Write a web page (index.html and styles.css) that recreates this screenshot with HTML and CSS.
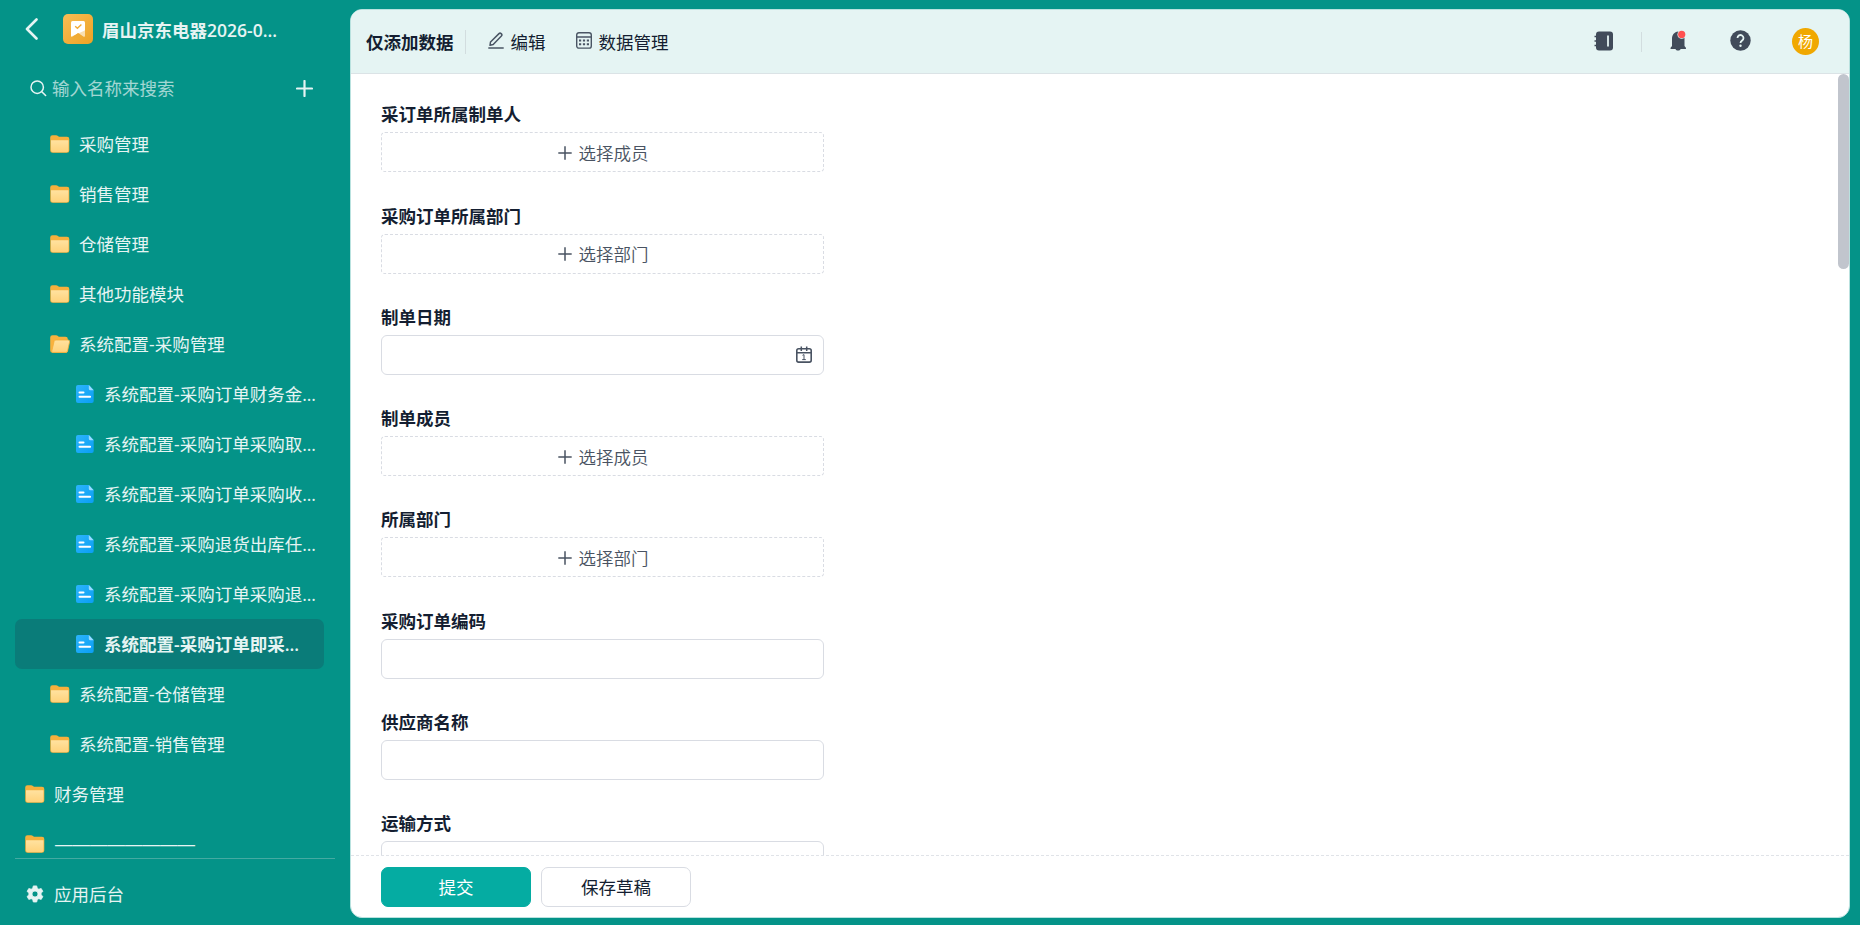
FILE: index.html
```html
<!DOCTYPE html>
<html lang="zh-CN">
<head>
<meta charset="utf-8">
<title>仅添加数据</title>
<link rel="stylesheet" href="styles.css">
</head>
<body>
<svg class="defs" width="0" height="0" aria-hidden="true">
  <defs>
    <linearGradient id="gFolder" x1="0" y1="0" x2="0" y2="1"><stop offset="0" stop-color="#ffe2a0"/><stop offset="1" stop-color="#ffd27a"/></linearGradient>
    <linearGradient id="gDoc" x1="0" y1="0" x2="1" y2="1"><stop offset="0" stop-color="#2cb4fb"/><stop offset="1" stop-color="#0a9ef5"/></linearGradient>
    <symbol id="folder" viewBox="0 0 20 18">
      <path d="M.2 2.500A2.300 2.300 0 0 1 2.500.2h3.700c.6 0 1 .2 1.400.6L9 1.800h8a2.300 2.300 0 0 1 2.300 2.300v11.400a2.300 2.300 0 0 1-2.300 2.300H2.500A2.300 2.300 0 0 1 .2 15.500z" fill="#f6b03d"/>
      <path d="M1 5.300h17.500v10a1.900 1.900 0 0 1-1.900 1.900H2.900A1.900 1.900 0 0 1 1 15.300z" fill="url(#gFolder)"/>
    </symbol>
    <symbol id="folder-open" viewBox="0 0 20 18">
      <path d="M.2 2.500A2.300 2.300 0 0 1 2.500.2h3.700c.6 0 1 .2 1.400.6L8.800 1.800h6.700a2.300 2.300 0 0 1 2.300 2.300v11.400a2.300 2.300 0 0 1-2.300 2.300h-13A2.300 2.300 0 0 1 .2 15.500z" fill="#f9b23e"/>
      <path d="M6 5h11.900c1.300 0 1.900.8 1.700 1.800l-2 9.100c-.2 1-.8 1.500-1.700 1.500H3.100c-1 0-1.500-.6-1.300-1.500L4.100 6.400C4.300 5.500 5 5 6 5z" fill="url(#gFolder)" stroke="#f4ae38" stroke-width=".8"/>
    </symbol>
    <symbol id="doc" viewBox="0 0 18 18">
      <path d="M2 0h11l4.700 5v11a2 2 0 0 1-2 2H2a2 2 0 0 1-2-2V2a2 2 0 0 1 2-2z" fill="url(#gDoc)"/>
      <path d="M12.800 0 17.700 5.200h-3.400a1.500 1.500 0 0 1-1.500-1.500z" fill="#9adcff"/>
      <path d="M3.500 7.500h4M3.500 11.800h10.600" stroke="#fff" stroke-width="2" stroke-linecap="round"/>
    </symbol>
    <symbol id="plus" viewBox="0 0 14 14"><path d="M7 .3v13.400M.3 7h13.400" stroke="currentColor" stroke-width="1.500" fill="none"/></symbol>
  </defs>
</svg>
<div class="app">
  <aside class="sidebar">
    <div class="brand">
      <svg class="back" width="14" height="22" viewBox="0 0 14 22"><path d="M11.500 1.500 2 11l9.500 9.500" fill="none" stroke="currentColor" stroke-width="2.600" stroke-linecap="round" stroke-linejoin="round"/></svg>
      <svg class="logo" width="30" height="30" viewBox="0 0 30 30"><defs><linearGradient id="gLogo" x1="0" y1="0" x2="1" y2="1"><stop offset="0" stop-color="#f8bd55"/><stop offset="1" stop-color="#eda224"/></linearGradient></defs><rect width="30" height="30" rx="5" fill="url(#gLogo)"/><path d="M8 16.500V21.700c0 1.200.8 1.500 1.700.8L15 19l5.300 3.500c.9.700 1.700.4 1.700-.8V16.500z" fill="#f9dfb0"/><path d="M8 8.500A1.500 1.500 0 0 1 9.500 7h11A1.500 1.500 0 0 1 22 8.500V16.500L8 22.500z" fill="#fff"/><path d="M9.200 23.500 15 19l5.800 4.500z" fill="#f0ab35"/><path d="m12.200 12.300 2.200 2 4-3.800" fill="none" stroke="#f2ab34" stroke-width="1.400"/></svg>
      <span class="brand-name">眉山京东电器2026-0...</span>
    </div>
    <div class="search">
      <svg width="17" height="17" viewBox="0 0 17 17"><circle cx="7.200" cy="7.200" r="6.200" fill="none" stroke="currentColor" stroke-width="1.500"/><path d="m11.800 11.800 3.800 3.700" stroke="currentColor" stroke-width="1.600" stroke-linecap="round"/></svg>
      <span class="search-text">输入名称来搜索</span>
      <svg class="add" width="17" height="17" viewBox="0 0 17 17"><path d="M8.500 1v15M1 8.500h15" stroke="currentColor" stroke-width="2.200" stroke-linecap="round"/></svg>
    </div>
    <nav class="tree">
      <div class="node l2"><svg class="folder"><use href="#folder"/></svg><span>采购管理</span></div>
      <div class="node l2"><svg class="folder"><use href="#folder"/></svg><span>销售管理</span></div>
      <div class="node l2"><svg class="folder"><use href="#folder"/></svg><span>仓储管理</span></div>
      <div class="node l2"><svg class="folder"><use href="#folder"/></svg><span>其他功能模块</span></div>
      <div class="node l2"><svg class="folder"><use href="#folder-open"/></svg><span>系统配置-采购管理</span></div>
      <div class="node l3"><svg class="doc"><use href="#doc"/></svg><span>系统配置-采购订单财务金...</span></div>
      <div class="node l3"><svg class="doc"><use href="#doc"/></svg><span>系统配置-采购订单采购取...</span></div>
      <div class="node l3"><svg class="doc"><use href="#doc"/></svg><span>系统配置-采购订单采购收...</span></div>
      <div class="node l3"><svg class="doc"><use href="#doc"/></svg><span>系统配置-采购退货出库任...</span></div>
      <div class="node l3"><svg class="doc"><use href="#doc"/></svg><span>系统配置-采购订单采购退...</span></div>
      <div class="node l3 active"><svg class="doc"><use href="#doc"/></svg><span>系统配置-采购订单即采...</span></div>
      <div class="node l2"><svg class="folder"><use href="#folder"/></svg><span>系统配置-仓储管理</span></div>
      <div class="node l2"><svg class="folder"><use href="#folder"/></svg><span>系统配置-销售管理</span></div>
      <div class="node l1"><svg class="folder"><use href="#folder"/></svg><span>财务管理</span></div>
      <div class="node l1"><svg class="folder"><use href="#folder"/></svg><span class="rule">————————</span></div>
    </nav>
    <div class="admin">
      <svg width="18" height="18" viewBox="0 0 18 18"><path fill="currentColor" stroke="currentColor" stroke-width=".8" stroke-linejoin="round" fill-rule="evenodd" d="M7.300 0h3.400l.6 2.400 1.500.9 2.400-.7 1.700 2.900-1.800 1.700v1.700l1.800 1.700-1.700 2.900-2.400-.7-1.500.9-.6 2.400H7.300l-.6-2.400-1.500-.9-2.400.7-1.700-2.900 1.800-1.700V7.200L1.100 5.500l1.700-2.900 2.400.7 1.500-.9zM9 5.100a3 3 0 1 0 0 6 3 3 0 0 0 0-6z" transform="translate(0 .9)"/></svg>
      <span>应用后台</span>
    </div>
  </aside>
  <main class="panel">
    <header class="topbar">
      <h1>仅添加数据</h1>
      <i class="sep"></i>
      <a class="tool edit"><svg width="16" height="17" viewBox="0 0 16 17"><path d="M2 13.300 2.500 10 11 1.600a1.500 1.500 0 0 1 2.100 0l.3.300a1.500 1.500 0 0 1 0 2.100L5.200 12.500z M.3 16h15.400" fill="none" stroke="currentColor" stroke-width="1.500" stroke-linejoin="round"/></svg><span>编辑</span></a>
      <a class="tool data"><svg width="16" height="17" viewBox="0 0 16 17"><rect x=".7" y=".7" width="14.600" height="15.400" rx="2.200" fill="none" stroke="currentColor" stroke-width="1.400"/><path d="M1 5h14" stroke="currentColor" stroke-width="1.400"/><path d="M3 8.500h2.200M6.900 8.500h2.200M10.800 8.500h2.200M3 12.300h2.200M6.900 12.300h2.200M10.800 12.300h2.200" stroke="currentColor" stroke-width="2"/></svg><span>数据管理</span></a>
      <div class="actions">
        <svg class="book" width="20" height="20" viewBox="0 0 20 20"><rect x="2" y=".5" width="17" height="19" rx="3" fill="currentColor"/><path d="M.5 5.500h3M.5 10h3M.5 14.500h3" stroke="currentColor" stroke-width="1.600"/><path d="M14 4.500v11" stroke="#e5f4f3" stroke-width="1.800"/></svg>
        <i class="sep"></i>
        <svg class="bell" width="18" height="22" viewBox="0 0 18 22"><path d="M8 1.500c-3.500.6-6 3.300-6 7v7.500L.6 17.800c-.3.600 0 1.300.7 1.300h4.200c.7 2 4.400 2 5.100 0h4.600c.7 0 1-.7.700-1.300L14.500 16V8.500C14.500 4.800 12 2.100 8 1.500z" fill="currentColor"/><circle cx="11.700" cy="4.400" r="4.300" fill="#e5f4f3"/><circle cx="11.700" cy="4.400" r="3.600" fill="#ff5050"/></svg>
        <svg class="help" width="21" height="21" viewBox="0 0 21 21"><circle cx="10.500" cy="10.500" r="10.200" fill="currentColor"/><path d="M7.500 8a3 3 0 1 1 4.500 2.600c-1 .6-1.500 1.100-1.500 2.400" fill="none" stroke="#e5f4f3" stroke-width="1.800"/><circle cx="10.500" cy="15.800" r="1.200" fill="#e5f4f3"/></svg>
        <span class="avatar">杨</span>
      </div>
    </header>
    <section class="body">
      <div class="form">
        <div class="field"><label>采订单所属制单人</label><div class="pick"><svg><use href="#plus"/></svg>选择成员</div></div>
        <div class="field"><label>采购订单所属部门</label><div class="pick"><svg><use href="#plus"/></svg>选择部门</div></div>
        <div class="field"><label>制单日期</label><div class="input"><svg width="16" height="17" viewBox="0 0 16 17"><rect x=".8" y="2.700" width="14.400" height="13.400" rx="1.800" fill="none" stroke="currentColor" stroke-width="1.600"/><path d="M1 6.700h14M5.300.5v4.500M10.700.5v4.500" stroke="currentColor" stroke-width="1.500"/><path d="M6.500 9.300 8 8.600v5M6.200 13.600h3.600" fill="none" stroke="currentColor" stroke-width="1"/></svg></div></div>
        <div class="field"><label>制单成员</label><div class="pick"><svg><use href="#plus"/></svg>选择成员</div></div>
        <div class="field"><label>所属部门</label><div class="pick"><svg><use href="#plus"/></svg>选择部门</div></div>
        <div class="field"><label>采购订单编码</label><div class="input"></div></div>
        <div class="field"><label>供应商名称</label><div class="input"></div></div>
        <div class="field"><label>运输方式</label><div class="input"></div></div>
      </div>
      <div class="scrollbar"></div>
    </section>
    <footer class="footer">
      <button class="btn primary">提交</button>
      <button class="btn">保存草稿</button>
    </footer>
  </main>
</div>
</body>
</html>
```
FILE: styles.css
```css
* { box-sizing: border-box; }
body {
  margin: 0;
  font: 17.5px/24px "Open Sans", "Noto Sans CJK SC", sans-serif;
  color: #141e31;
  background: #049388;
}
svg { flex: none; display: block; }
.defs { position: absolute; }
.app { display: flex; height: 925px; overflow: hidden; }

.sidebar { width: 350px; display: flex; flex-direction: column; color: #e6f4f3; padding: 0 15px; }
.brand { height: 58px; display: flex; align-items: center; padding-left: 10px; }
.logo { margin-left: 24px; }
.brand-name { margin-left: 9px; font-weight: 600; padding-top: 2px; }
.search { height: 61px; display: flex; align-items: center; padding: 0 22px 1px 15px; }
.search-text { margin-left: 5px; flex: 1; opacity: .7; }
.tree { height: 739px; overflow: hidden; }
.node { width: 309px; height: 50px; display: flex; align-items: center; border-radius: 7px; white-space: nowrap; }
.node.active { background: #0a7c79; font-weight: 600; }
.l1 { padding-left: 10px; }
.l2 { padding-left: 35px; }
.l3 { padding-left: 61px; }
.folder { width: 20px; height: 18px; margin-right: 9px; }
.doc { width: 18px; height: 18px; margin-right: 10px; }
.rule { font-family: "Liberation Sans", sans-serif; padding-left: 1px; }
.admin { border-top: 1px solid #44aaa2; width: 320px; flex: 1; display: flex; align-items: center; gap: 10px; padding: 3px 0 0 11px; }

.panel { width: 1500px; height: 909px; margin-top: 9px; background: #fff; border: 1px solid #b9e2df; border-radius: 12px; overflow: hidden; display: flex; flex-direction: column; }
.topbar { height: 64px; flex: none; background: #e5f4f3; border-bottom: 1px solid #dbe3e6; display: flex; align-items: center; padding-left: 15px; }
h1 { margin: 0; font-size: 17.5px; font-weight: 600; }
.sep { width: 1px; height: 24px; background: #d2dddf; margin-left: 11px; }
.tool { display: flex; align-items: center; }
.tool svg { color: #4a5564; margin: -3px 7px 0 0; }
.edit { margin-left: 22px; }
.data { margin-left: 30px; }
.actions { margin-left: auto; display: flex; align-items: center; color: #414b5a; padding-right: 30px; }
.actions .sep { height: 20px; margin-left: 27px; }
.bell { margin-left: 28px; }
.help { margin-left: 42px; }
.book, .bell, .help { margin-bottom: 2px; }
.avatar { width: 27px; height: 27px; margin-left: 41px; border-radius: 50%; background: #f0a800; color: #fff; font-size: 15px; text-align: center; line-height: 27px; }

.body { flex: 1; min-height: 0; overflow: hidden; display: flex; justify-content: space-between; }
.form { width: 443px; margin-left: 30px; padding-top: 28.300px; }
.field { height: 101.25px; }
label { display: block; height: 30px; line-height: 24px; font-weight: 600; }
.pick, .input { height: 40px; border: 1px solid #d9dce3; border-radius: 6px; display: flex; align-items: center; }
.pick { border-style: dashed; justify-content: center; gap: 7px; color: #495362; border-radius: 4px; font-weight: 350; padding: 1px 0 0 1px; }
.pick svg { width: 14px; height: 14px; }
.input { justify-content: flex-end; padding-right: 11px; color: #495362; }
.scrollbar { width: 11px; height: 195px; border-radius: 6px; background: #c1c5cd; }
.footer { height: 62px; flex: none; border-top: 1px dashed #e0e3e8; padding: 11px 30px; display: flex; gap: 10px; }
.btn { width: 150px; height: 40px; padding: 0; border: 1px solid #d9dce3; border-radius: 7px; background: #fff; color: #141e31; font: inherit; }
.btn.primary { background: #05aca2; border-color: #05aca2; color: #fff; }
```
